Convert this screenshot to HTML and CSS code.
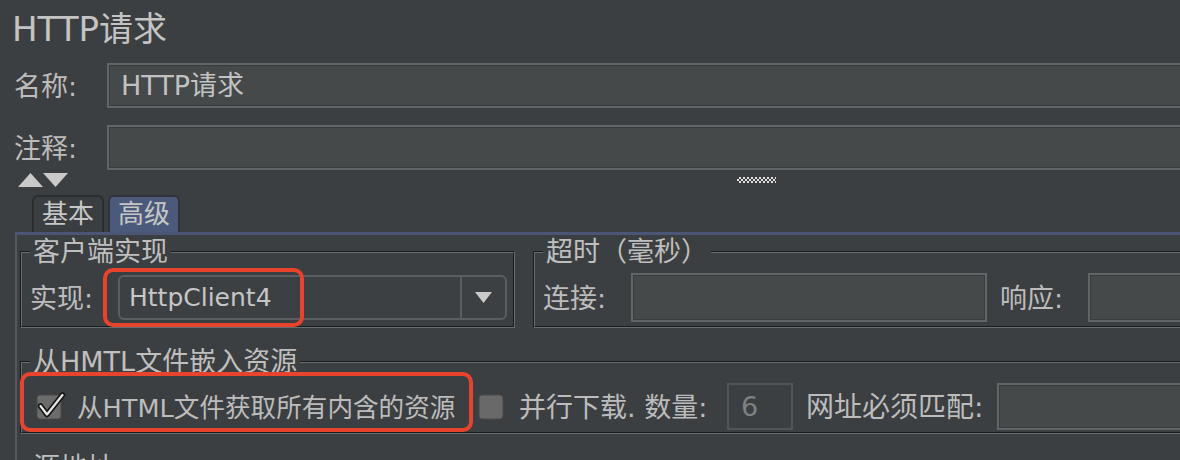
FILE: index.html
```html
<!DOCTYPE html>
<html lang="zh-CN">
<head>
<meta charset="utf-8">
<title>HTTP请求</title>
<link rel="stylesheet" href="styles.css">
</head>
<body>
<div class="page">
  <div class="title">HTTP请求</div>

  <div class="row name-row">
    <span class="row-label">名称:</span>
    <div class="field">HTTP请求</div>
  </div>
  <div class="row comment-row">
    <span class="row-label">注释:</span>
    <div class="field"></div>
  </div>

  <div class="toggles">
    <svg class="arrows" width="50" height="14" viewBox="0 0 50 14">
      <polygon points="0,14 12.5,0 25,14" fill="#c9c9c9"/>
      <polygon points="25,0 50,0 37.5,14" fill="#c9c9c9"/>
    </svg>
    <div class="grip"></div>
  </div>

  <div class="tabs">
    <div class="tab">基本</div>
    <div class="tab active">高级</div>
  </div>

  <div class="panel">
    <div class="group-row">
      <fieldset class="group impl">
        <legend>客户端实现</legend>
        <div class="group-line">
          <span class="glabel">实现:</span>
          <div class="combo">
            <span class="combo-text">HttpClient4</span>
            <span class="combo-btn">
              <svg width="17" height="11" viewBox="0 0 17 11"><polygon points="0,0 17,0 8.5,11" fill="#cacaca"/></svg>
            </span>
            <div class="hl hl-impl"></div>
          </div>
        </div>
      </fieldset>
      <fieldset class="group timeout">
        <legend>超时（毫秒）</legend>
        <div class="group-line">
          <span class="glabel">连接:</span>
          <div class="field connect"></div>
          <span class="glabel resp">响应:</span>
          <div class="field grow"></div>
        </div>
      </fieldset>
    </div>

    <fieldset class="group embed">
      <legend>从HMTL文件嵌入资源</legend>
      <div class="group-line tall">
        <div class="check-item first">
          <svg class="cb" width="30" height="28" viewBox="0 0 30 28">
            <rect x="1" y="2" width="24" height="24" rx="3" fill="#6c6c6c" stroke="#4b4b4b"/>
            <path d="M4.5 13 L11 21.5 L26.5 2" fill="none" stroke="#151515" stroke-width="5.5" stroke-linecap="round" stroke-linejoin="round"/>
            <path d="M4.5 13 L11 21.5 L26.5 2" fill="none" stroke="#e8e8e8" stroke-width="2.2" stroke-linecap="round" stroke-linejoin="round"/>
          </svg>
          <span class="ctext main">从HTML文件获取所有内含的资源</span>
          <div class="hl hl-embed"></div>
        </div>
        <div class="check-item second">
          <svg class="cb" width="26" height="28" viewBox="0 0 26 28">
            <rect x="1" y="2" width="24" height="24" rx="3" fill="#696969" stroke="#4b4b4b"/>
          </svg>
          <span class="ctext">并行下载. 数量:</span>
        </div>
        <div class="field num">6</div>
        <span class="glabel url">网址必须匹配:</span>
        <div class="field grow url-field"></div>
      </div>
    </fieldset>

    <fieldset class="group source">
      <legend>源地址</legend>
      <div class="group-line"></div>
    </fieldset>
  </div>
</div>
</body>
</html>
```

FILE: styles.css
```css
html, body {
  margin: 0;
  padding: 0;
}
body {
  background: #3c3f41;
  width: 1180px;
  height: 460px;
  overflow: hidden;
}
.page {
  width: 1270px;
  font-family: "DejaVu Sans", "Noto Sans CJK SC", sans-serif;
  font-size: 27px;
  color: #bcbcbc;
}
.title {
  height: 63px;
  line-height: 58px;
  font-size: 34px;
  padding-left: 12px;
  color: #c4c4c4;
}
.row {
  display: flex;
  align-items: center;
  margin-left: 14px;
  height: 45px;
}
.comment-row {
  margin-top: 17px;
}
.row-label {
  flex: 0 0 93px;
  line-height: 30px;
  padding-top: 3px;
}
.field {
  box-sizing: border-box;
  height: 45px;
  flex: 1;
  border: 2px solid #626567;
  background: #45494a;
  box-shadow: inset 0 0 0 1px #393c3e;
  padding-left: 12px;
  line-height: 41px;
  color: #c2c2c2;
}
.toggles {
  display: flex;
  height: 25px;
}
.arrows {
  margin: 3px 0 0 18px;
}
.grip {
  margin: 7px 0 0 669px;
  width: 39px;
  height: 6px;
  background: repeating-conic-gradient(#e0e0e0 0 25%, #3c3f41 0 50%) 0 0 / 4px 4px;
}
.tabs {
  display: flex;
  gap: 4px;
  margin-left: 32px;
  height: 37px;
}
.tab {
  box-sizing: border-box;
  height: 37px;
  padding: 0 8px;
  border: 2px solid #2b2d2f;
  border-bottom: 0;
  border-radius: 6px 6px 0 0;
  line-height: 34px;
  font-size: 26px;
  background: #3b3e40;
  color: #c6c6c6;
}
.tab.active {
  background: #4b5a7b;
  border-color: #30333a;
}
.panel {
  margin-left: 15px;
  border-top: 3px solid #4b5677;
  border-left: 2px solid #575a5c;
  padding-top: 3px;
}
.group-row {
  display: flex;
  margin-left: 3px;
  gap: 18px;
}
fieldset.group {
  margin: 0;
  min-width: 0;
  border: 2px groove #6a6d70;
  padding: 7px 8px 4px;
}
legend {
  padding: 0 3px;
  line-height: 28px;
  color: #bfbfbf;
}
fieldset.impl {
  box-sizing: border-box;
  flex: 0 0 495px;
  padding-right: 6px;
}
fieldset.timeout {
  flex: 1;
}
.group-line {
  display: flex;
  align-items: center;
  height: 49px;
}
.group-line.tall {
  height: 47px;
}
.glabel {
  flex: 0 0 88px;
  line-height: 30px;
  padding-top: 2px;
}
.glabel.resp {
  margin-left: 13px;
}
.combo {
  position: relative;
  box-sizing: border-box;
  width: 389px;
  height: 45px;
  display: flex;
  border: 2px solid #5b5e60;
  border-radius: 6px;
  background: #3d4042;
}
.combo-text {
  flex: 1;
  padding-left: 9px;
  line-height: 41px;
  font-size: 25px;
  color: #c6c6c6;
}
.combo-btn {
  flex: 0 0 43px;
  border-left: 2px solid #5b5e60;
  display: flex;
  align-items: center;
  justify-content: center;
}
.hl {
  position: absolute;
  box-sizing: border-box;
  border: 4px solid #e8432d;
  border-radius: 10px;
  pointer-events: none;
}
.hl-impl {
  left: -17px;
  top: -9px;
  width: 201px;
  height: 59px;
}
.field.connect {
  flex: 0 0 356px;
  height: 49px;
}
.field.grow {
  flex: 1;
  height: 49px;
}
fieldset.embed {
  margin: 20px 0 0 3px;
  padding-bottom: 2px;
}
.check-item {
  display: flex;
  align-items: center;
  height: 47px;
}
.check-item.first {
  position: relative;
  flex: 0 0 442px;
  margin-left: 6px;
}
.check-item.second {
  flex: 0 0 249px;
}
.cb {
  flex: 0 0 auto;
  overflow: visible;
}
.first .cb {
  margin-right: 11px;
}
.second .cb {
  margin-right: 15px;
}
.ctext {
  line-height: 30px;
  padding-top: 2px;
  white-space: nowrap;
}
.ctext.main {
  font-size: 25.6px;
}
.hl-embed {
  left: -16px;
  top: -11px;
  width: 453px;
  height: 60px;
}
.field.num {
  flex: 0 0 66px;
  height: 47px;
  background: #3c3f41;
  border-color: #525557;
  box-shadow: none;
  color: #7e8183;
  padding-left: 12px;
  line-height: 43px;
}
.glabel.url {
  flex: 0 0 191px;
  margin-left: 13px;
  font-size: 28px;
}
.field.url-field {
  height: 47px;
}
fieldset.source {
  margin: 20px 0 0 3px;
}
```
